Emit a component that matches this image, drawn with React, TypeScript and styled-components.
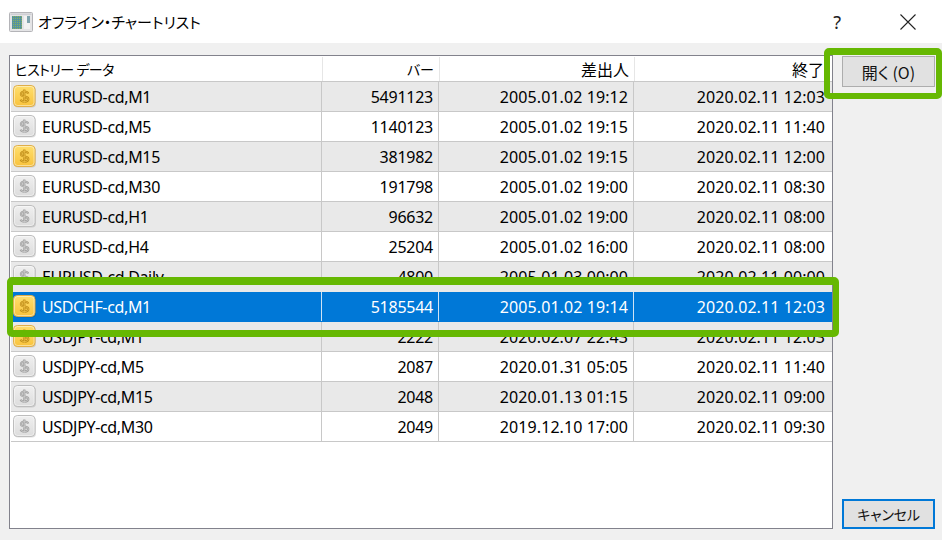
import React from "react";
import styled, { createGlobalStyle } from "styled-components";

const GlobalStyle = createGlobalStyle`
  html, body {
    margin: 0;
    padding: 0;
    width: 942px;
    height: 540px;
    overflow: hidden;
    background: #f0f0f0;
  }
  * {
    box-sizing: border-box;
  }
`;

const UI_FONT = `"Noto Sans", "Noto Sans CJK JP", sans-serif`;
const JP_FONT = `"Noto Sans CJK JP", "Noto Sans", sans-serif`;
const GREEN = "#66b802";

const Window = styled.div`
  position: relative;
  display: flex;
  flex-direction: column;
  width: 942px;
  height: 540px;
  font-family: ${UI_FONT};
  color: #000;
  overflow: hidden;
`;

const TitleBar = styled.header`
  display: flex;
  align-items: center;
  height: 43px;
  flex: none;
  background: #fff;
  padding-left: 9px;
`;

const Title = styled.h1`
  margin: 0 0 0 5px;
  font-family: ${JP_FONT};
  font-size: 15px;
  font-weight: 400;
  font-feature-settings: "palt";
  color: #000;
`;

const HelpMark = styled.span`
  margin-left: auto;
  margin-right: 59px;
  font-family: "Noto Sans", sans-serif;
  font-size: 18px;
  font-weight: 400;
  color: #222;
`;

const CloseButton = styled.svg`
  width: 16px;
  height: 16px;
  margin-right: 26px;
  flex: none;
`;

const Body = styled.main`
  flex: 1;
  display: flex;
  gap: 9px;
  padding: 12px 7px 12px 9px;
  background: #f0f0f0;
  border-bottom: 1px solid #555;
`;

const List = styled.section`
  width: 824px;
  flex: none;
  height: 474px;
  background: #fff;
  border: 1px solid #82828c;
  overflow: hidden;
`;

const HeaderRow = styled.div`
  display: grid;
  grid-template-columns: 313px 117px 195px 1fr;
  height: 26px;
  border-bottom: 1px solid #c8c8c8;
  font-family: ${JP_FONT};
  font-size: 14px;
  font-feature-settings: "palt";
  color: #000;
`;

const HeaderCell = styled.div<{ $left?: boolean; $last?: boolean; $kanji?: boolean }>`
  display: flex;
  align-items: center;
  justify-content: ${(p) => (p.$left ? "flex-start" : "flex-end")};
  padding: ${(p) => (p.$left ? "0 0 0 5px" : p.$last ? "0 8px 0 0" : "0 5px 0 0")};
  border-right: ${(p) => (p.$last ? "none" : "1px solid #e6e6e6")};
  margin-top: 1px;
  font-size: ${(p) => (p.$kanji ? "16px" : "14px")};
  letter-spacing: ${(p) => (p.$left ? "-0.5px" : "0")};
`;

const Row = styled.div<{ $shade?: boolean; $selected?: boolean }>`
  position: relative;
  display: grid;
  grid-template-columns: 311px 117px 195px 1fr;
  height: 30px;
  margin-left: 1px;
  font-size: 16px;
  border-bottom: 1px solid ${(p) => (p.$selected ? "#0078d7" : "#c8c8c8")};
  background: ${(p) => (p.$selected ? "#0078d7" : p.$shade ? "#e9e9e9" : "#fff")};
  color: ${(p) => (p.$selected ? "#fff" : "#000")};
  /* the strip above the highlighted row hides the bottom of the Daily row */
  box-shadow: ${(p) => (p.$selected ? "0 -8px 0 #e9e9e9" : "none")};
`;

const Cell = styled.div<{ $last?: boolean; $selected?: boolean }>`
  display: flex;
  align-items: center;
  justify-content: flex-end;
  padding-right: ${(p) => (p.$last ? "7px" : "5px")};
  border-right: ${(p) =>
    p.$last ? "none" : `1px solid ${p.$selected ? "#cfe3f5" : "#c8c8c8"}`};
  white-space: nowrap;
`;

const NameCell = styled(Cell)`
  justify-content: flex-start;
  padding: 0 0 0 2px;
  gap: 6px;
  letter-spacing: -0.35px;
`;

const BarsCell = styled(Cell)`
  letter-spacing: -0.25px;
`;

const DateCell = styled(Cell)`
  letter-spacing: 0.08px;
`;

const CoinIcon = styled.svg`
  width: 23px;
  height: 23px;
  flex: none;
`;

const Side = styled.aside`
  flex: 1;
  display: flex;
  flex-direction: column;
  justify-content: space-between;
  align-items: stretch;
  padding-top: 1px;
`;

const DialogButton = styled.button<{ $focused?: boolean }>`
  height: ${(p) => (p.$focused ? "30px" : "31px")};
  padding: 0;
  font-family: ${JP_FONT};
  font-size: ${(p) => (p.$focused ? "14px" : "16px")};
  letter-spacing: ${(p) => (p.$focused ? "-0.2px" : "0")};
  font-feature-settings: "palt";
  color: #111;
  background: #e1e1e1;
  border: ${(p) => (p.$focused ? "2px solid #0078d7" : "1px solid #adadad")};
`;

const Highlight = styled.div<{ $top: number; $left: number; $width: number; $height: number; $edge: string }>`
  position: absolute;
  top: ${(p) => p.$top}px;
  left: ${(p) => p.$left}px;
  width: ${(p) => p.$width}px;
  height: ${(p) => p.$height}px;
  border-style: solid;
  border-color: ${GREEN};
  border-width: ${(p) => p.$edge};
  border-radius: 5px;
  pointer-events: none;
`;

function Coin({ gold, id }: { gold: boolean; id: string }) {
  const top = gold ? "#ffdf6e" : "#f0f0f0";
  const bottom = gold ? "#f8c23c" : "#dcdcdc";
  const edge = gold ? "#dfae4a" : "#bdbdbd";
  const ink = gold ? "#bd8b18" : "#a0a0a0";
  const shine = gold ? "#f3c64a" : "#d2d2d2";
  const dollar =
    "M15.2 8.6c-.5-1.3-1.9-1.9-3.9-1.9-2 0-3.4 1-3.4 2.4 0 3.5 7.4 1.6 7.4 5 0 1.5-1.6 2.5-3.8 2.5-1.9 0-3.3-.7-3.9-2M11.3 4.6v13.2";
  return (
    <CoinIcon viewBox="0 0 23 23">
      <defs>
        <linearGradient id={id} x1="0" y1="0" x2="0" y2="1">
          <stop offset="0" stopColor={top} />
          <stop offset="1" stopColor={bottom} />
        </linearGradient>
      </defs>
      <rect x="1" y="1.5" width="22" height="21" rx="4" fill="#000" opacity="0.12" />
      <rect x="0.5" y="0.5" width="21.5" height="21" rx="4" fill={`url(#${id})`} stroke={edge} />
      <rect x="1.5" y="1.5" width="19.5" height="19" rx="3" fill="none" stroke="#fff" strokeOpacity="0.45" />
      <path d={dollar} fill="none" stroke={ink} strokeWidth="2.2" />
      <path d={dollar} fill="none" stroke={shine} strokeWidth="0.7" />
    </CoinIcon>
  );
}

function WindowIcon() {
  return (
    <svg width="24" height="20" viewBox="0 0 24 20">
      <defs>
        <pattern id="chartDots" width="2" height="2" patternUnits="userSpaceOnUse">
          <rect width="2" height="2" fill="#5b9c8c" />
          <rect width="1" height="1" fill="#86a86c" />
          <rect x="1" y="1" width="1" height="1" fill="#4f8ab0" />
        </pattern>
      </defs>
      <rect x="0.5" y="0.5" width="23" height="19" rx="1" fill="#e4e4e6" stroke="#b4b4b8" />
      <rect x="1.5" y="1.5" width="21" height="1.5" fill="#cfcfd4" />
      <rect x="3" y="4" width="10" height="13" fill="url(#chartDots)" />
      <rect x="15" y="4" width="3" height="13" fill="#f2f2f2" />
      <rect x="18" y="4" width="3" height="7" fill="#7fa3ae" />
      <rect x="18" y="11" width="3" height="6" fill="#f2f2f2" />
    </svg>
  );
}

type ChartRow = {
  name: string;
  bars: string;
  from: string;
  to: string;
  gold?: boolean;
  selected?: boolean;
};

const rows: ChartRow[] = [
  { name: "EURUSD-cd,M1", bars: "5491123", from: "2005.01.02 19:12", to: "2020.02.11 12:03", gold: true },
  { name: "EURUSD-cd,M5", bars: "1140123", from: "2005.01.02 19:15", to: "2020.02.11 11:40" },
  { name: "EURUSD-cd,M15", bars: "381982", from: "2005.01.02 19:15", to: "2020.02.11 12:00", gold: true },
  { name: "EURUSD-cd,M30", bars: "191798", from: "2005.01.02 19:00", to: "2020.02.11 08:30" },
  { name: "EURUSD-cd,H1", bars: "96632", from: "2005.01.02 19:00", to: "2020.02.11 08:00" },
  { name: "EURUSD-cd,H4", bars: "25204", from: "2005.01.02 16:00", to: "2020.02.11 08:00" },
  { name: "EURUSD-cd,Daily", bars: "4800", from: "2005.01.03 00:00", to: "2020.02.11 00:00" },
  { name: "USDCHF-cd,M1", bars: "5185544", from: "2005.01.02 19:14", to: "2020.02.11 12:03", gold: true, selected: true },
  { name: "USDJPY-cd,M1", bars: "2222", from: "2020.02.07 22:43", to: "2020.02.11 12:03", gold: true },
  { name: "USDJPY-cd,M5", bars: "2087", from: "2020.01.31 05:05", to: "2020.02.11 11:40" },
  { name: "USDJPY-cd,M15", bars: "2048", from: "2020.01.13 01:15", to: "2020.02.11 09:00" },
  { name: "USDJPY-cd,M30", bars: "2049", from: "2019.12.10 17:00", to: "2020.02.11 09:30" },
];

export default function App() {
  return (
    <Window>
      <GlobalStyle />
      <TitleBar>
        <WindowIcon />
        <Title>オフライン・チャートリスト</Title>
        <HelpMark>?</HelpMark>
        <CloseButton viewBox="0 0 16 16">
          <path d="M.5.5l15 15M15.5.5l-15 15" stroke="#222" strokeWidth="1.1" fill="none" />
        </CloseButton>
      </TitleBar>
      <Body>
        <List>
          <HeaderRow>
            <HeaderCell $left>ヒストリー データ</HeaderCell>
            <HeaderCell>バー</HeaderCell>
            <HeaderCell $kanji>差出人</HeaderCell>
            <HeaderCell $kanji $last>終了</HeaderCell>
          </HeaderRow>
          {rows.map((row, i) => (
            <Row key={row.name} $shade={i % 2 === 0} $selected={row.selected}>
              <NameCell $selected={row.selected}>
                <Coin gold={!!row.gold} id={`coin-${i}`} />
                {row.name}
              </NameCell>
              <BarsCell $selected={row.selected}>{row.bars}</BarsCell>
              <DateCell $selected={row.selected}>{row.from}</DateCell>
              <DateCell $last>{row.to}</DateCell>
            </Row>
          ))}
        </List>
        <Side>
          <DialogButton>開く (O)</DialogButton>
          <DialogButton $focused>キャンセル</DialogButton>
        </Side>
      </Body>
      <Highlight $top={277} $left={7} $width={832} $height={60} $edge="8px 6px 7px 6px" />
      <Highlight $top={48} $left={824} $width={118} $height={51} $edge="7px 6px 6px 6px" />
    </Window>
  );
}
